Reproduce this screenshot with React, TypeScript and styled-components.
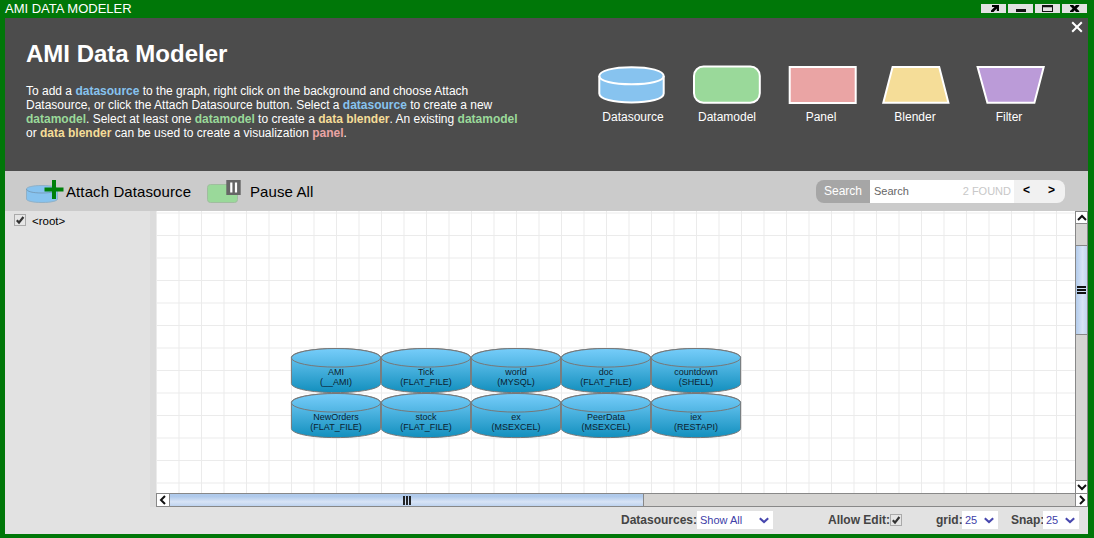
import React from "react";
import styled, { createGlobalStyle, css } from "styled-components";

const GlobalStyle = createGlobalStyle`
  * { box-sizing: border-box; }
  body { margin: 0; overflow: hidden; }
  svg { display: block; flex: none; }
`;

const colors = {
  frame: "#007708",
  header: "#4c4c4c",
  toolbar: "#cbcbcb",
  panel: "#e2e2e2",
  blue: "#87c3ef",
  green: "#9ad99a",
  yellow: "#f5dd98",
  red: "#eaa4a4",
  purple: "#bb9bd8",
  line: "#888888",
};

const Window = styled.div`
  width: 1094px;
  height: 538px;
  padding: 0 6px 4px 5px;
  display: flex;
  flex-direction: column;
  background: ${colors.frame};
  font-family: "Liberation Sans", Arial, sans-serif;
  font-size: 12px;
  color: #000;
  white-space: nowrap;
`;

const TitleBar = styled.div`
  height: 18px;
  flex: none;
  display: flex;
  justify-content: space-between;
  padding-right: 1px;
`;

const Title = styled.div`
  color: #fff;
  font-size: 13px;
  line-height: 18px;
`;

const WindowButtons = styled.div`
  display: flex;
  gap: 2px;
  padding-top: 4px;
`;

const WindowButton = styled.button`
  width: 25px;
  height: 9px;
  padding: 0;
  border: 0;
  background: ${colors.panel};
`;

const Header = styled.header`
  height: 153px;
  flex: none;
  display: flex;
  background: ${colors.header};
  color: #fff;
`;

const Intro = styled.div`
  width: 581px;
  padding: 21px 0 0 21px;
`;

const Heading = styled.h1`
  margin: 0;
  font-size: 24px;
  line-height: 30px;
`;

const Description = styled.p`
  margin: 15px 0 0;
  line-height: 14px;
`;

const Term = styled.b<{ $color: string }>`
  color: ${(p) => p.$color};
`;

const Legend = styled.div`
  display: flex;
  padding-top: 47px;
`;

const LegendItem = styled.div`
  width: 94px;
  text-align: center;
  line-height: 16px;
`;

const CloseButton = styled.button`
  width: 22px;
  height: 16px;
  margin-left: 10px;
  padding: 2px 0 0 5px;
  border: 0;
  background: none;
`;

const Toolbar = styled.div`
  height: 40px;
  flex: none;
  display: flex;
  padding: 9px 23px 0 21px;
  background: ${colors.toolbar};
`;

const ToolButton = styled.button<{ $width: number; $gap: number }>`
  width: ${(p) => p.$width}px;
  height: 24px;
  display: flex;
  gap: ${(p) => p.$gap}px;
  padding: 0;
  border: 0;
  background: none;
  color: #000;
  font: 15px/24px "Liberation Sans", Arial, sans-serif;
  letter-spacing: 0.1px;
`;

const SearchBox = styled.div`
  width: 249px;
  height: 23px;
  margin-left: auto;
  display: flex;
  border-radius: 8px;
  overflow: hidden;
  line-height: 22px;
`;

const SearchLabel = styled.div`
  width: 54px;
  text-align: center;
  color: #fff;
  background: #a6a6a6;
`;

const SearchField = styled.div`
  width: 144px;
  padding: 0 3px 0 4px;
  display: flex;
  justify-content: space-between;
  background: #fff;
  color: #666;
  font-size: 11px;
  line-height: 23px;
`;

const Found = styled.span`
  color: #c8c8c8;
`;

const SearchNav = styled.div`
  flex: 1;
  display: flex;
  background: #f1f1f1;
  font-weight: bold;
  line-height: 21px;
`;

const NavButton = styled.span`
  width: 25px;
  text-align: center;
`;

const Main = styled.main`
  height: 296px;
  flex: none;
  display: flex;
`;

const Sidebar = styled.aside`
  width: 145px;
  padding: 3px 0 0 9px;
  display: flex;
  align-items: flex-start;
  background: ${colors.panel};
`;

const TreeLabel = styled.span`
  margin-left: 6px;
  font-size: 11.5px;
  line-height: 14px;
`;

const Divider = styled.div`
  width: 6px;
  background: #dcdcdc;
`;

const Workspace = styled.section`
  width: 932px;
  display: grid;
  grid-template: 282px 14px / 919px 13px;
`;

const ScrollTrack = styled.div<{ $vertical?: boolean }>`
  display: flex;
  background: #d5d4d2;
  ${(p) =>
    p.$vertical
      ? css`
          flex-direction: column;
          border: solid ${colors.line};
          border-width: 0 1px;
        `
      : css`
          border: solid ${colors.line};
          border-width: 1px 0;
        `}
`;

const ScrollButton = styled.div<{ $sides: string; $w: number; $h: number }>`
  width: ${(p) => p.$w}px;
  height: ${(p) => p.$h}px;
  flex: none;
  display: flex;
  align-items: center;
  justify-content: center;
  border: solid ${colors.line};
  border-width: ${(p) => p.$sides};
  background: #fff;
`;

const Thumb = styled.div<{ $vertical?: boolean }>`
  flex: none;
  display: flex;
  align-items: center;
  justify-content: center;
  border: solid ${colors.line};
  ${(p) =>
    p.$vertical
      ? css`
          height: 90px;
          margin-top: 21px;
          margin-bottom: auto;
          border-width: 1px 0;
          background: linear-gradient(to right, #b3ccec, #d8e4f6 60%, #c2d6f0);
        `
      : css`
          width: 475px;
          border-width: 0 1px;
          background: linear-gradient(#b0caeb 20%, #d8e4f6 65%, #bed3ef);
        `}
`;

const Footer = styled.footer`
  height: 27px;
  flex: none;
  display: flex;
  padding: 4px 0 0 616px;
  background: ${colors.panel};
  font-weight: bold;
  color: #444;
  line-height: 18px;
`;

const Field = styled.div<{ $label: number; $after: number }>`
  display: grid;
  grid-template-columns: ${(p) => p.$label}px auto;
  margin-right: ${(p) => p.$after}px;
`;

const Select = styled.div<{ $width: number }>`
  width: ${(p) => p.$width}px;
  height: 18px;
  padding: 0 4px 0 3px;
  display: flex;
  align-items: center;
  justify-content: space-between;
  background: #fff;
  color: #4040a8;
  font-size: 11px;
  font-weight: normal;
`;

const CheckSlot = styled.span`
  padding-top: 3px;
`;

const Check = () => (
  <svg width="12" height="12" viewBox="0 0 12 12">
    <rect x="0.5" y="0.5" width="11" height="11" fill="#e6e6e6" stroke="#aaa" />
    <path d="M2.8 6.2 L5 8.6 L9.4 3" fill="none" stroke="#333" strokeWidth="2.2" />
  </svg>
);

const Chevron = () => (
  <svg width="10" height="7" viewBox="0 0 10 7">
    <path d="M0.8 1.2 L5 5 L9.2 1.2" fill="none" stroke="#4747ae" strokeWidth="2.1" />
  </svg>
);

const arrows = {
  up: "M1 7 L5 3 L9 7",
  down: "M1 3 L5 7 L9 3",
  left: "M7 1 L3 5 L7 9",
  right: "M3 1 L7 5 L3 9",
};

const Arrow = ({ dir }: { dir: keyof typeof arrows }) => (
  <svg width="10" height="10" viewBox="0 0 10 10">
    <path d={arrows[dir]} fill="none" stroke="#111" strokeWidth="2" />
  </svg>
);

const windowIcons = [
  <path key="a" d="M11 1h7v6h-2.2V4.6L12.5 8H10V6.6L13.6 3H11z" fill="#000" />,
  <path key="b" d="M8 5h10v3H8z" fill="#111" />,
  <path key="c" d="M7 1h11v7H7z M8 3.2v3.8h9V3.2z" fill="#111" fillRule="evenodd" />,
  <path key="d" d="M8 1h3.2l1.4 1.6L14 1h3.2v1L14.6 4.5 17.2 7v1H14l-1.4-1.7L11.2 8H8V7l2.6-2.5L8 2z" fill="#000" />,
];

const legend = [
  {
    name: "Datasource",
    color: colors.blue,
    shape: (
      <>
        <path d="M13.3 11 V28.5 C13.3 34 27 37.5 45.5 37.5 S77.7 34 77.7 28.5 V11 C77.7 5.7 64 2.2 45.5 2.2 S13.3 5.7 13.3 11Z" />
        <path d="M13.3 11 C13.3 16 27 19.3 45.5 19.3 S77.7 16 77.7 11" fill="none" />
      </>
    ),
  },
  { name: "Datamodel", color: colors.green, shape: <rect x="14" y="1.5" width="65.8" height="36.3" rx="9.5" /> },
  { name: "Panel", color: colors.red, shape: <rect x="15.7" y="2" width="66" height="36" /> },
  { name: "Blender", color: colors.yellow, shape: <path d="M24.6 2H71.2L80.4 37.8H15.3Z" /> },
  { name: "Filter", color: colors.purple, shape: <path d="M15.6 2H81.7L72.4 37.8H25.4Z" /> },
];

const sources = [
  ["AMI", "(__AMI)"],
  ["Tick", "(FLAT_FILE)"],
  ["world", "(MYSQL)"],
  ["doc", "(FLAT_FILE)"],
  ["countdown", "(SHELL)"],
  ["NewOrders", "(FLAT_FILE)"],
  ["stock", "(FLAT_FILE)"],
  ["ex", "(MSEXCEL)"],
  ["PeerData", "(MSEXCEL)"],
  ["iex", "(RESTAPI)"],
];

const Graph = () => (
  <svg width="919" height="282" fontSize="9" textAnchor="middle">
    <defs>
      <linearGradient id="cyl" x1="0" y1="0" x2="0" y2="1">
        <stop offset="0" stopColor="#76cdfa" />
        <stop offset="1" stopColor="#128fbd" />
      </linearGradient>
      <linearGradient id="lid" x1="0" y1="0" x2="0" y2="1">
        <stop offset="0" stopColor="#76cdfa" />
        <stop offset="1" stopColor="#4fb4e2" />
      </linearGradient>
    </defs>
    <rect width="919" height="282" fill="#fff" />
    <g stroke="#ebebeb">
      {Array.from({ length: 41 }, (_, i) => (
        <path key={`v${i}`} d={`M${i * 22.5 + 0.5} 0V282`} />
      ))}
      {Array.from({ length: 13 }, (_, i) => (
        <path key={`h${i}`} d={`M0 ${i * 22.5 + 2}H919`} />
      ))}
    </g>
    {sources.map(([name, type], i) => (
      <g key={name} transform={`translate(${135 + (i % 5) * 90} ${137 + Math.floor(i / 5) * 45})`}>
        <path
          d="M0.4 9.5V35.5C0.4 40.7 20 44.6 45 44.6S89.6 40.7 89.6 35.5V9.5C89.6 4.5 70 0.5 45 0.5S0.4 4.5 0.4 9.5Z"
          fill="url(#cyl)"
          stroke="#777"
        />
        <ellipse cx="45" cy="9.8" rx="44.6" ry="9.3" fill="url(#lid)" stroke="#777" />
        <text x="45" y="27" fill="#0c2230">{name}</text>
        <text x="45" y="37" fill="#0c2230">{type}</text>
      </g>
    ))}
  </svg>
);

export default function App() {
  return (
    <Window>
      <GlobalStyle />
      <TitleBar>
        <Title>AMI DATA MODELER</Title>
        <WindowButtons>
          {windowIcons.map((icon, i) => (
            <WindowButton key={i}>
              <svg width="25" height="9">{icon}</svg>
            </WindowButton>
          ))}
        </WindowButtons>
      </TitleBar>
      <Header>
        <Intro>
          <Heading>AMI Data Modeler</Heading>
          <Description>
            To add a <Term $color={colors.blue}>datasource</Term> to the graph, right click on the background and choose Attach
            <br />
            Datasource, or click the Attach Datasource button. Select a <Term $color={colors.blue}>datasource</Term> to create a new
            <br />
            <Term $color={colors.green}>datamodel</Term>. Select at least one <Term $color={colors.green}>datamodel</Term> to create a{" "}
            <Term $color={colors.yellow}>data blender</Term>. An existing <Term $color={colors.green}>datamodel</Term>
            <br />
            or <Term $color={colors.yellow}>data blender</Term> can be used to create a visualization <Term $color={colors.red}>panel</Term>.
          </Description>
        </Intro>
        <Legend>
          {legend.map((item) => (
            <LegendItem key={item.name}>
              <svg width="94" height="44" fill={item.color} stroke="#fff" strokeWidth="2">{item.shape}</svg>
              {item.name}
            </LegendItem>
          ))}
        </Legend>
        <CloseButton>
          <svg width="12" height="12">
            <path d="M1.2 1.2L10.8 10.8M10.8 1.2L1.2 10.8" stroke="#fff" strokeWidth="2" />
          </svg>
        </CloseButton>
      </Header>
      <Toolbar>
        <ToolButton $width={181} $gap={2}>
          <svg width="38" height="24">
            <path d="M0.5 9V19C0.5 21 7 22.5 16 22.5S31.5 21 31.5 19V9C31.5 7 25 5.5 16 5.5S0.5 7 0.5 9Z" fill={colors.blue} stroke="#91b1c7" />
            <path d="M0.5 9C0.5 11.5 7 13 16 13S31.5 11.5 31.5 9" fill="none" stroke="#7295b0" strokeWidth="0.8" />
            <path d="M18.5 9.5H37.5M28 0V19" stroke="#00800a" strokeWidth="4" />
          </svg>
          Attach Datasource
        </ToolButton>
        <ToolButton $width={130} $gap={9}>
          <svg width="34" height="24">
            <rect x="0.5" y="4.5" width="30" height="18" rx="3" fill={colors.green} stroke="#a0bd9f" />
            <rect x="19.3" y="0" width="14.4" height="15" fill="#666" />
            <path d="M24.3 2.5V12.5M29 2.5V12.5" stroke="#fff" strokeWidth="2.2" />
          </svg>
          Pause All
        </ToolButton>
        <SearchBox>
          <SearchLabel>Search</SearchLabel>
          <SearchField>
            <span>Search</span>
            <Found>2 FOUND</Found>
          </SearchField>
          <SearchNav>
            <NavButton>&lt;</NavButton>
            <NavButton>&gt;</NavButton>
          </SearchNav>
        </SearchBox>
      </Toolbar>
      <Main>
        <Sidebar>
          <Check />
          <TreeLabel>&lt;root&gt;</TreeLabel>
        </Sidebar>
        <Divider />
        <Workspace>
          <Graph />
          <ScrollTrack $vertical>
            <ScrollButton $sides="1px 0" $w={11} $h={13}>
              <Arrow dir="up" />
            </ScrollButton>
            <Thumb $vertical>
              <svg width="9" height="8">
                <path d="M0 1H9M0 4H9M0 7H9" stroke="#111" strokeWidth="1.8" />
              </svg>
            </Thumb>
            <ScrollButton $sides="1px 0 0" $w={11} $h={13}>
              <Arrow dir="down" />
            </ScrollButton>
          </ScrollTrack>
          <ScrollTrack>
            <ScrollButton $sides="0 0 0 1px" $w={13} $h={12}>
              <Arrow dir="left" />
            </ScrollButton>
            <Thumb>
              <svg width="8" height="9">
                <path d="M1 0V9M4 0V9M7 0V9" stroke="#111" strokeWidth="1.8" />
              </svg>
            </Thumb>
          </ScrollTrack>
          <ScrollButton $sides="1px" $w={13} $h={14}>
            <Arrow dir="right" />
          </ScrollButton>
        </Workspace>
      </Main>
      <Footer>
        <Field $label={76} $after={55}>
          <span>Datasources:</span>
          <Select $width={76}>
            Show All <Chevron />
          </Select>
        </Field>
        <Field $label={62} $after={34}>
          <span>Allow Edit:</span>
          <CheckSlot>
            <Check />
          </CheckSlot>
        </Field>
        <Field $label={26} $after={13}>
          <span>grid:</span>
          <Select $width={36}>
            25 <Chevron />
          </Select>
        </Field>
        <Field $label={32} $after={0}>
          <span>Snap:</span>
          <Select $width={36}>
            25 <Chevron />
          </Select>
        </Field>
      </Footer>
    </Window>
  );
}
